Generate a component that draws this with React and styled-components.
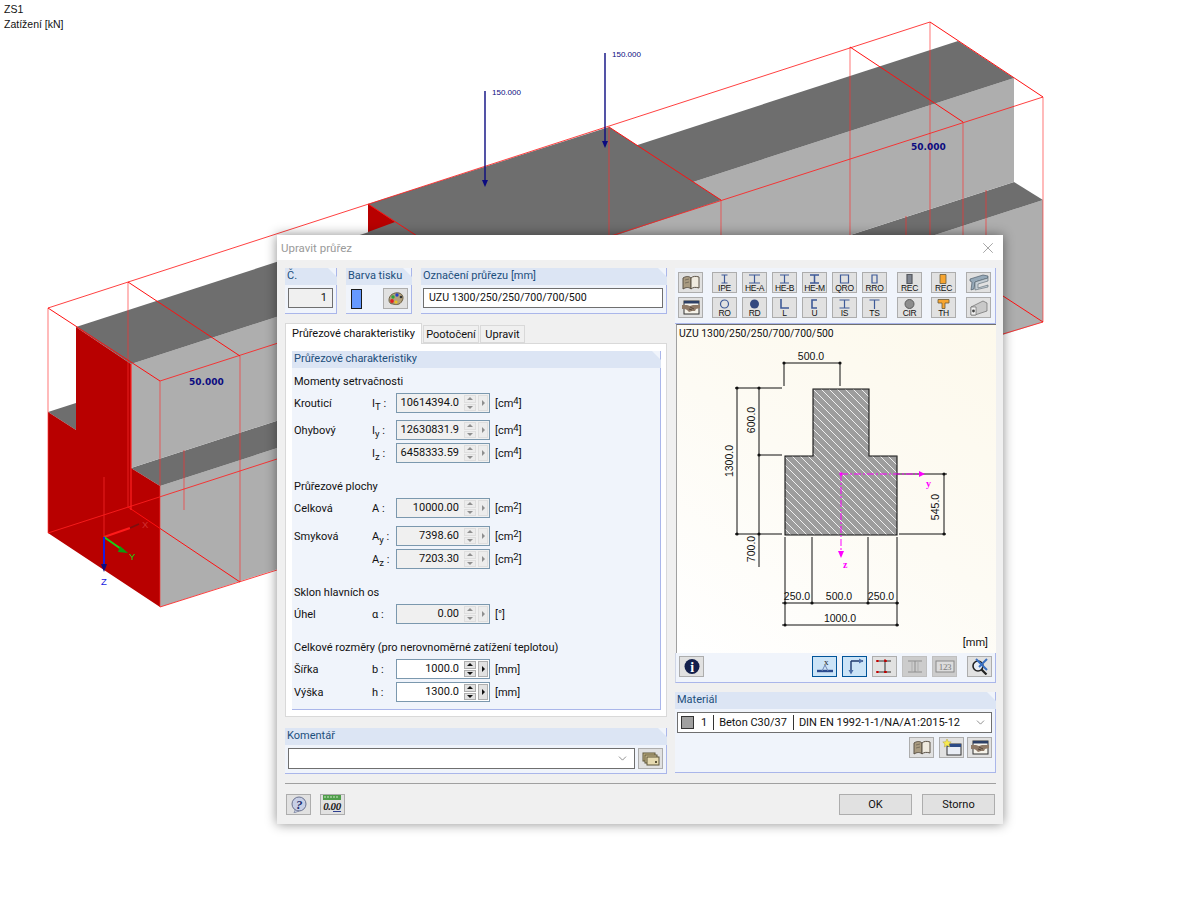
import React from 'react';
import styled, { createGlobalStyle } from 'styled-components';
import { X, ChevronDown } from 'lucide-react';

const GlobalStyle = createGlobalStyle`
  html, body {
    margin: 0;
    padding: 0;
    background: #fff;
  }
  body {
    width: 1199px;
    height: 899px;
    overflow: hidden;
    font-family: Roboto, "Noto Sans", "Liberation Sans", sans-serif;
    font-size: 11px;
    color: #111;
  }
`;

const Page = styled.div`
  position: relative;
  width: 1199px;
  height: 899px;
  overflow: hidden;
  background: #fff;
`;

const Scene = styled.svg`
  position: absolute;
  left: 0;
  top: 0;
`;

const Caption = styled.div`
  position: absolute;
  left: 4px;
  top: 2px;
  font-family: "Liberation Sans", Arial, sans-serif;
  font-size: 10.5px;
  line-height: 15px;
  color: #111;
`;

const Dialog = styled.div`
  position: absolute;
  left: 277px;
  top: 235px;
  width: 726px;
  height: 589px;
  background: #f0f0f0;
  box-shadow: 0 0 11px rgba(0, 0, 0, 0.45);
  display: flex;
  flex-direction: column;
`;

const TitleBar = styled.div`
  height: 25px;
  background: #fff;
  display: flex;
  align-items: center;
  justify-content: space-between;
  padding: 0 6px 0 4px;
  font-size: 11.5px;
  color: #9a9a9a;
  svg { color: #8a8a8a; }
`;

const Body = styled.div`
  display: grid;
  grid-template-columns: 382px 321px;
  column-gap: 8px;
  padding: 8px 7px 0 8px;
`;

const Column = styled.div`
  display: flex;
  flex-direction: column;
  height: 506px;
`;

const TopRow = styled.div`
  display: flex;
  gap: 9px;
  height: 46px;
`;

const Group = styled.div`
  flex: ${p => (p.$grow ? 1 : 'none')};
  width: ${p => (p.$width ? `${p.$width}px` : 'auto')};
  height: ${p => (p.$height ? `${p.$height}px` : 'auto')};
  margin-top: ${p => p.$top || 0}px;
  background: #f0f4fb;
  border-right: 1px solid #aab6ea;
  border-bottom: 1px solid #aab6ea;
  box-sizing: border-box;
  display: flex;
  flex-direction: column;
`;

const GroupHead = styled.div`
  height: 17px;
  line-height: 16px;
  margin-right: -1px;
  padding-left: 2px;
  background: #dce5f4;
  color: #1d4f7c;
  font-size: 11px;
  white-space: nowrap;
  clip-path: polygon(0 0, calc(100% - 9px) 0, 100% 9px, 100% 100%, 0 100%);
`;

const GroupContent = styled.div`
  display: flex;
  align-items: center;
  justify-content: ${p => p.$justify || 'flex-start'};
  padding: ${p => p.$pad || '3px 3px 0 3px'};
  gap: ${p => p.$gap || 0}px;
`;

const FieldBox = styled.div`
  box-sizing: border-box;
  width: ${p => (p.$width ? `${p.$width}px` : 'auto')};
  flex: ${p => (p.$width ? 'none' : 1)};
  height: 20px;
  line-height: 18px;
  border: 1px solid #6f6f6f;
  padding: 0 5px;
  background: ${p => (p.$disabled ? '#f0f0f0' : '#fff')};
  text-align: ${p => (p.$right ? 'right' : 'left')};
  font-size: ${p => (p.$right ? 11 : 10.6)}px;
`;

const Swatch = styled.div`
  box-sizing: border-box;
  width: 11px;
  height: 20px;
  margin-left: 2px;
  background: #6699ff;
  border: 1px solid #1b1b1b;
`;

const IconButton = styled.button`
  box-sizing: border-box;
  width: 25px;
  height: 21px;
  padding: 0;
  flex: none;
  margin-left: ${p => p.$left || 0}px;
  background: ${p => (p.$active ? '#cce4f7' : p.$off ? '#cccccc' : '#e1e1e1')};
  border: 1px solid ${p => (p.$active ? '#005499' : p.$off ? '#bfbfbf' : '#adadad')};
  display: flex;
  flex-direction: column;
  align-items: center;
  justify-content: center;
  font-family: "Liberation Sans", Arial, sans-serif;
  font-size: 8.5px;
  line-height: 8px;
  letter-spacing: -0.3px;
  color: #111;
  svg { display: block; flex: none; }
`;

const TabBar = styled.div`
  display: flex;
  align-items: flex-end;
  height: 20px;
  margin-top: 9px;
  position: relative;
  z-index: 1;
`;

const Tab = styled.div`
  box-sizing: border-box;
  height: ${p => (p.$active ? 21 : 18)}px;
  width: ${p => p.$width}px;
  margin-right: 1px;
  margin-bottom: ${p => (p.$active ? -1 : 0)}px;
  text-align: center;
  white-space: nowrap;
  line-height: ${p => (p.$active ? 19 : 17)}px;
  background: ${p => (p.$active ? '#fff' : '#f0f0f0')};
  border: 1px solid #d9d9d9;
  border-bottom: ${p => (p.$active ? 'none' : '1px solid #d9d9d9')};
`;

const TabPane = styled.div`
  box-sizing: border-box;
  height: 374px;
  background: #fff;
  border: 1px solid #d9d9d9;
  padding: 7px 5px 6px 6px;
  display: flex;
`;

const SectionBody = styled.div`
  padding: 0 0 0 2px;
  display: flex;
  flex-direction: column;
`;

const SectionTitle = styled.div`
  margin-top: ${p => p.$top}px;
  height: 14px;
  line-height: 14px;
`;

const Row = styled.div`
  display: grid;
  grid-template-columns: 78px 24px 94px auto;
  align-items: center;
  height: 20px;
  margin-top: ${p => p.$top}px;
`;

const Symbol = styled.span`
  white-space: nowrap;
  font-size: 11px;
`;

const Low = styled.span`
  font-size: 9.5px;
  vertical-align: -3px;
  line-height: 0;
`;

const High = styled.span`
  font-size: 9.5px;
  vertical-align: 3px;
  line-height: 0;
`;

const Unit = styled.span`
  margin-left: 5px;
`;

const Spinner = styled.div`
  box-sizing: border-box;
  height: 20px;
  border: 1px solid #7b98ae;
  background: ${p => (p.$disabled ? '#f0f0f0' : '#fff')};
  display: flex;
  align-items: stretch;
  color: #111;
`;

const SpinValue = styled.div`
  flex: 1;
  text-align: right;
  line-height: 18px;
  padding-right: 5px;
`;

const SpinArrows = styled.div`
  width: 12px;
  margin: 1px 0;
  display: flex;
  flex-direction: column;
  gap: 1px;
`;

const SpinCell = styled.div`
  flex: 1;
  display: flex;
  align-items: center;
  justify-content: center;
  background: ${p => (p.$disabled ? '#ececec' : '#e1e1e1')};
  border: 1px solid ${p => (p.$disabled ? '#dedede' : '#adadad')};
`;

const SpinNext = styled(SpinCell)`
  flex: none;
  width: 8px;
  margin: 1px 1px 1px 2px;
`;

const Arrow = styled.div`
  width: 0;
  height: 0;
  border-left: ${p => (p.$dir === 'right' ? '3px solid' : '3px solid transparent')};
  border-right: ${p => (p.$dir === 'right' ? '0' : '3px solid transparent')};
  border-top: ${p => (p.$dir === 'down' ? '3px solid' : p.$dir === 'right' ? '3px solid transparent' : '0')};
  border-bottom: ${p => (p.$dir === 'up' ? '3px solid' : p.$dir === 'right' ? '3px solid transparent' : '0')};
  border-left-color: ${p => (p.$dir === 'right' ? (p.$disabled ? '#8f8f8f' : '#111') : 'transparent')};
  border-top-color: ${p => (p.$dir === 'down' ? (p.$disabled ? '#8f8f8f' : '#111') : 'transparent')};
  border-bottom-color: ${p => (p.$dir === 'up' ? (p.$disabled ? '#8f8f8f' : '#111') : 'transparent')};
`;

const ComboBox = styled.div`
  box-sizing: border-box;
  flex: 1;
  height: 21px;
  border: 1px solid #6f6f6f;
  background: #fff;
  display: flex;
  align-items: center;
  justify-content: flex-end;
  padding-right: 5px;
  color: #555;
`;

const ToolRow = styled.div`
  display: flex;
  padding-left: 3px;
  margin-top: 4px;
`;

const Preview = styled.div`
  box-sizing: border-box;
  position: relative;
  height: 329px;
  margin-left: 1px;
  border-top: 1px solid #6f6f6f;
  border-left: 1px solid #a0a0a0;
  background: linear-gradient(215deg, #fdf9ec 0%, #fdfbf4 50%, #ffffff 100%);
`;

const PreviewLabel = styled.div`
  padding: 2px 0 0 2px;
  font-size: 10.4px;
  line-height: 14px;
`;

const PreviewUnit = styled.div`
  position: absolute;
  right: 8px;
  bottom: 3px;
  line-height: 14px;
`;

const Drawing = styled.svg`
  position: absolute;
  left: -1px;
  top: -1px;
`;

const PreviewTools = styled.div`
  box-sizing: border-box;
  height: 30px;
  background: #f0f4fb;
  border-bottom: 1px solid #aab6ea;
  border-right: 1px solid #aab6ea;
  border-left: 1px solid #d0d6e6;
  display: flex;
  padding: 3px 0 0 3px;
`;

const MaterialCombo = styled.div`
  box-sizing: border-box;
  height: 21px;
  margin: 3px 3px 0 2px;
  padding-right: 4px;
  border: 1px solid #6f6f6f;
  background: #fff;
  display: flex;
  align-items: center;
  white-space: nowrap;
  svg { flex: none; }
`;

const MaterialCell = styled.div`
  padding: 0 6px 0 ${p => p.$left || 5}px;
  height: 15px;
  line-height: 15px;
  border-right: ${p => (p.$last ? 'none' : '1px solid #333')};
  flex: ${p => (p.$last ? 1 : 'none')};
`;

const MaterialSwatch = styled.div`
  box-sizing: border-box;
  width: 13px;
  height: 13px;
  margin-left: 3px;
  background: #a0a0a0;
  border: 1px solid #333;
  flex: none;
`;

const ButtonRow = styled.div`
  display: flex;
  justify-content: flex-end;
  padding: 4px 3px 0 0;
`;

const Separator = styled.div`
  height: 1px;
  margin: 9px 7px 0 8px;
  background: #a0a0a0;
`;

const Footer = styled.div`
  display: flex;
  align-items: center;
  padding: 10px 8px 0 9px;
`;

const TextButton = styled.button`
  box-sizing: border-box;
  width: 73px;
  height: 21px;
  padding: 0;
  margin-left: ${p => p.$left || 0}px;
  background: #e1e1e1;
  border: 1px solid #adadad;
  font: inherit;
  color: #111;
`;

// little drawings for the toolbars
const Ico = ({ w = 20, h = 17, children }) => (
  <svg width={w} height={h} viewBox={`0 0 ${w} ${h}`}>{children}</svg>
);

const Book = () => (
  <Ico>
    <path d="M2 4c3-2 6-2 8 0v11c-2-2-5-2-8 0z" fill="#a89a80" stroke="#5b5246" />
    <path d="M18 3c-3-1-6-1-8 1v11c2-2 5-2 8-1z" fill="#efeadf" stroke="#5b5246" />
    <path d="M4 6l4-1M4 9l4-1" stroke="#6d6455" strokeWidth="0.8" />
  </Ico>
);

const HandBook = () => (
  <Ico>
    <rect x="3" y="2" width="15" height="13" fill="#f6f3ea" stroke="#333" />
    <rect x="3" y="2" width="15" height="2.5" fill="#2c3f66" />
    <path d="M1 6h5l3 1 3-1h7v3l-4 1-1 2h-3l-3 1-2-2-2-1H1z" fill="#8f7a68" />
    <path d="M9 8l4 2M8 10l3 1" stroke="#3d3028" strokeWidth="0.7" />
  </Ico>
);

const NewWindow = () => (
  <Ico>
    <rect x="5" y="5" width="14" height="11" fill="#e9edf5" stroke="#333" />
    <rect x="5" y="5" width="14" height="3" fill="#2c4a86" />
    <path d="M5 0l1.3 2.7 2.9.3-2.1 2 .6 3-2.7-1.5L2.3 8l.6-3L.8 3l2.9-.3z" fill="#f8ea50" stroke="#b3a23a" strokeWidth="0.5" />
  </Ico>
);

const Palette = () => (
  <Ico>
    <path d="M3 10c0-5 5-8 10-7 4 1 5 5 3 8-2 4-6 4-9 3-3 0-4-2-4-4z" fill="#b3a27c" stroke="#6a5d42" />
    <circle cx="7" cy="7" r="1.7" fill="#2fa33a" />
    <circle cx="11" cy="5" r="1.7" fill="#2442c8" />
    <circle cx="6" cy="11" r="1.9" fill="#e02020" />
    <circle cx="10" cy="12" r="1.5" fill="#e9c21f" />
    <circle cx="15" cy="7" r="1.3" fill="#333" />
  </Ico>
);

const Stacked = () => (
  <Ico>
    <rect x="2" y="3" width="12" height="8" fill="#cdbd8a" stroke="#5c5438" />
    <rect x="4" y="5" width="12" height="8" fill="#d8c998" stroke="#5c5438" />
    <rect x="6" y="7" width="12" height="8" fill="#e6dab0" stroke="#5c5438" />
    <rect x="14" y="11" width="2" height="2" fill="#5c5438" />
  </Ico>
);

const Help = () => (
  <Ico>
    <circle cx="10" cy="8" r="7" fill="#c7cfe6" stroke="#6b7390" />
    <path d="M6 14l-1 3 5-2z" fill="#c7cfe6" stroke="#6b7390" strokeWidth="0.6" />
    <text x="10" y="12.5" fontFamily="Liberation Serif, serif" fontWeight="700" fontStyle="italic" fontSize="13" fill="#1f2f70" textAnchor="middle">?</text>
  </Ico>
);

const Units = () => (
  <Ico w={23} h={19}>
    <rect x="2" y="0" width="18" height="5" fill="#4f9e4a" />
    <path d="M4 1v2M7 1v2M10 1v2M13 1v2M16 1v2" stroke="#cfe8c8" />
    <text x="11" y="15" fontFamily="Liberation Serif, serif" fontStyle="italic" fontWeight="700" fontSize="11" fill="#1a1a1a" textAnchor="middle" letterSpacing="-0.4">0.00</text>
    <path d="M12 16.5h8" stroke="#2e3f8f" />
  </Ico>
);

const Info = () => (
  <Ico>
    <circle cx="10" cy="8.5" r="7.5" fill="#131f4c" />
    <text x="10" y="13.5" fontFamily="Liberation Serif, serif" fontWeight="700" fontSize="14" fill="#fff" textAnchor="middle">i</text>
  </Ico>
);

const AxisX = () => (
  <Ico>
    <text x="11" y="7" fontFamily="Liberation Serif, serif" fontSize="9" fill="#222" textAnchor="middle">x</text>
    <path d="M2 13h16" stroke="#2b4b8f" strokeWidth="2.4" />
    <path d="M10 7l-3 6M10 7l3 6" fill="none" stroke="#6f87b5" />
  </Ico>
);

const AxisYZ = () => (
  <Ico>
    <path d="M6 3v12M6 3h12" fill="none" stroke="#1f3a6e" strokeWidth="1.4" />
    <path d="M14 0.5l4.5 2.5L14 5.5zM3.5 12l2.5 4.5 2.5-4.5z" fill="#4f6fa8" />
  </Ico>
);

const RedPoints = () => (
  <Ico>
    <path d="M4 3h12M4 14h12M10 3v11" stroke="#333" />
    <path d="M2 3h16M2 14h16" stroke="#c00000" strokeDasharray="1 7" strokeLinecap="round" strokeWidth="2" />
    <path d="M10 1v2M10 13v2" stroke="#c00000" />
  </Ico>
);

const DimOff = () => (
  <Ico>
    <path d="M3 3h14M3 14h14M10 3v11" stroke="#8e8e8e" fill="none" />
    <path d="M7 3v11M13 3v11" stroke="#adadad" fill="none" />
  </Ico>
);

const Num123 = () => (
  <Ico>
    <rect x="1" y="3" width="18" height="11" fill="#dcdcdc" stroke="#8a8a8a" />
    <text x="10" y="12" fontFamily="Liberation Serif, serif" fontSize="9" fill="#7a7a7a" textAnchor="middle">123</text>
  </Ico>
);

const Zoom = () => (
  <Ico>
    <circle cx="8" cy="8" r="5" fill="#e6ecf5" stroke="#222" strokeWidth="1.6" />
    <path d="M11.5 11.5l5 5" stroke="#222" strokeWidth="2.2" />
    <path d="M6 1l11 11M17 1L9 9" stroke="#3a6fc0" strokeWidth="2" />
  </Ico>
);

const BeamA = () => (
  <Ico>
    <path d="M1 5l13-4 5 1v2L6 8l-1 7-3 1 1-8-2-1z" fill="#96a9b8" stroke="#3e4e5c" strokeWidth="0.6" />
    <path d="M6 8l13-4v3L9 10v4l10-3v2L6 16z" fill="#c4cdd4" stroke="#56646f" strokeWidth="0.6" />
  </Ico>
);

const BeamB = () => (
  <Ico>
    <path d="M2 8l12-6 4 2v8L6 16H2z" fill="#c8c8c8" stroke="#5a5a5a" strokeWidth="0.6" />
    <path d="M2 8h5v8H2z" fill="#f2f2f2" stroke="#5a5a5a" strokeWidth="0.6" />
    <circle cx="4.5" cy="12" r="1.4" fill="#444" />
  </Ico>
);

// profile glyphs above the little labels
const Prof = ({ d, fill = 'none', stroke = '#3e5a98', sw = 1.2, children }) => (
  <svg width="15" height="10" viewBox="0 0 15 10">
    {d && <path d={d} fill={fill} stroke={stroke} strokeWidth={sw} />}
    {children}
  </svg>
);

const shapes = {
  IPE: <Prof d="M4.5 1h6M4.5 9h6M7.5 1v8" />,
  'HE-A': <Prof d="M2 1h11M2 9h11M7.5 1v8" />,
  'HE-B': <Prof d="M3 1h9M3 9h9M7.5 1v8" />,
  'HE-M': <Prof d="M3 1h9M3 9h9M7.5 1v8" sw={1.5} />,
  QRO: <Prof d="M3.5 1h8v8h-8z" />,
  RRO: <Prof d="M5 1h5v8H5z" />,
  REC: <Prof d="M5 0.5h5v9H5z" fill="#7f8590" stroke="#55585e" />,
  REC2: <Prof d="M4 0.5h6v9H4z" fill="#f7a530" stroke="#6a5a3a" sw={0.8} />,
  RO: <Prof><circle cx="7.5" cy="5" r="4" fill="none" stroke="#3e5a98" strokeWidth="1.2" /></Prof>,
  RD: <Prof><circle cx="7.5" cy="5" r="4.5" fill="#33487f" /></Prof>,
  L: <Prof d="M4 0v9h8" sw={1.6} />,
  U: <Prof d="M10 1H5v8h5" sw={1.6} />,
  IS: <Prof d="M2.5 1h10M2.5 9h10M7.5 1v8" />,
  TS: <Prof d="M2.5 1h10M7.5 1v9" />,
  CIR: <Prof><circle cx="7.5" cy="5" r="4.5" fill="#8d8d8d" stroke="#5e5e5e" /></Prof>,
  TH: <Prof d="M2 0.5h11v3.5H9v5.5H6V4H2z" fill="#f7a530" stroke="#6a5a3a" sw={0.8} />,
};

const toolRows = [
  [
    { el: <Book /> },
    { label: 'IPE', left: 9 }, { label: 'HE-A', left: 5 }, { label: 'HE-B', left: 5 }, { label: 'HE-M', left: 5 },
    { label: 'QRO', left: 5 }, { label: 'RRO', left: 5 }, { label: 'REC', left: 10 },
    { label: 'REC', shape: 'REC2', left: 9 }, { el: <BeamA />, left: 10 },
  ],
  [
    { el: <HandBook /> },
    { label: 'RO', left: 9 }, { label: 'RD', left: 5 }, { label: 'L', left: 5 }, { label: 'U', left: 5 },
    { label: 'IS', left: 5 }, { label: 'TS', left: 5 }, { label: 'CIR', left: 10 },
    { label: 'TH', left: 9 }, { el: <BeamB />, left: 10 },
  ],
];

const SpinField = ({ value, disabled }) => (
  <Spinner $disabled={disabled}>
    <SpinValue>{value}</SpinValue>
    <SpinArrows>
      <SpinCell $disabled={disabled}><Arrow $dir="up" $disabled={disabled} /></SpinCell>
      <SpinCell $disabled={disabled}><Arrow $dir="down" $disabled={disabled} /></SpinCell>
    </SpinArrows>
    <SpinNext $disabled={disabled}><Arrow $dir="right" $disabled={disabled} /></SpinNext>
  </Spinner>
);

const FieldRow = ({ top, label, symbol, value, unit, disabled }) => (
  <Row $top={top}>
    <span>{label}</span>
    <Symbol>{symbol}</Symbol>
    <SpinField value={value} disabled={disabled} />
    <Unit>{unit}</Unit>
  </Row>
);

const cm4 = <>[cm<High>4</High>]</>;
const cm2 = <>[cm<High>2</High>]</>;

// 3D model behind the dialog, page coordinates
const Model = () => {
  const ties = [[48, 308, 160, 381], [128, 282, 240, 356], [368, 204, 480, 277], [609, 127, 721, 200], [850, 47, 963, 122], [930, 22, 1043, 97],
    [128, 507, 240, 582], [1003, 296, 1043, 322]];
  const rails = [[48, 308, 930, 22], [160, 381, 1043, 97], [48, 533, 277, 459], [160, 607, 277, 570], [1003, 334, 1043, 322]];
  const posts = [[48, 308, 533], [128, 282, 507], [160, 381, 607], [240, 356, 582], [184, 450, 510], [609, 127, 235], [721, 200, 235],
    [850, 47, 235], [930, 22, 235], [963, 122, 235], [906, 216, 235], [986, 190, 235], [1043, 97, 322], [104, 477, 537]];
  return (
    <Scene width="1199" height="899" viewBox="0 0 1199 899">
      <polygon points="160,486 1043,200 1043,322 160,607" fill="#aeaeae" />
      <polygon points="131,468 1014,182 1043,200 160,486" fill="#6e6e6e" />
      <polygon points="131,364 1014,78 1014,182 131,468" fill="#aeaeae" />
      <polygon points="76,327 958,41 1014,78 131,364" fill="#6e6e6e" />
      <polygon points="368,204 609,127 721,200 617,235 500,300 368,300" fill="#6e6e6e" />
      <polygon points="368,204 395,222 368,232" fill="#b80000" />
      <polygon points="48,412 76,403 76,430" fill="#6e6e6e" />
      <polygon points="76,327 131,364 131,468 160,486 160,607 48,533 48,412 76,430" fill="#b80000" />
      {posts.map(([x, y1, y2], i) => (
        <line key={i} x1={x} y1={y1} x2={x} y2={y2} stroke="#ff3030" strokeOpacity="0.55" strokeWidth="1.2" />
      ))}
      {rails.map(([a, b, c, d], i) => (
        <line key={i} x1={a} y1={b} x2={c} y2={d} stroke="#ff2020" strokeOpacity="0.85" />
      ))}
      {ties.map(([a, b, c, d], i) => (
        <line key={i} x1={a} y1={b} x2={c} y2={d} stroke="#ff1010" />
      ))}
      <line x1="131" y1="364" x2="131" y2="510" stroke="#ff2020" strokeOpacity="0.8" strokeWidth="1.5" />
      <line x1="605" y1="53" x2="605" y2="142" stroke="#0b0b80" strokeWidth="1.4" />
      <polygon points="602,141 608,141 605,148" fill="#0b0b80" />
      <line x1="485" y1="91" x2="485" y2="181" stroke="#0b0b80" strokeWidth="1.4" />
      <polygon points="482,180 488,180 485,187" fill="#0b0b80" />
      <g fontFamily="Liberation Sans, sans-serif" fontSize="8" fill="#0b0b80">
        <text x="612" y="57">150.000</text>
        <text x="492" y="95">150.000</text>
      </g>
      <g fontFamily="DejaVu Sans, sans-serif" fontSize="9" fontWeight="700" fill="#0b0b80">
        <text x="189" y="385">50.000</text>
        <text x="911" y="150">50.000</text>
      </g>
      <line x1="104" y1="537" x2="130" y2="528" stroke="#ff1a1a" strokeWidth="2" />
      <line x1="130" y1="528" x2="139" y2="524" stroke="#7a1010" strokeWidth="1.4" />
      <line x1="104" y1="537" x2="124" y2="551" stroke="#16d216" strokeWidth="2" />
      <polygon points="120,546 128,553 118,552" fill="#0f9a0f" />
      <line x1="104" y1="537" x2="104" y2="566" stroke="#1a1ae0" strokeWidth="2" />
      <polygon points="101,564 107,564 104,572" fill="#0b0b80" />
      <g fontFamily="Liberation Sans, sans-serif" fontSize="9.5">
        <text x="142" y="528" fill="#d23030">X</text>
        <text x="129" y="560" fill="#16d216">Y</text>
        <text x="101" y="585" fill="#1a1ae0">Z</text>
      </g>
    </Scene>
  );
};

const Dim = ({ x, y, rot, children }) => (
  <text x={x} y={y} textAnchor="middle" transform={rot ? `rotate(-90 ${x} ${y})` : undefined}>{children}</text>
);

// section drawing, offsets are relative to the preview corner (676,324)
const SectionDrawing = () => {
  const P = (x, y) => `${x - 676},${y - 324}`;
  const outline = [[813, 389], [869, 389], [869, 456], [897, 456], [897, 535], [785, 535], [785, 456], [813, 456]]
    .map(([x, y]) => P(x, y)).join(' ');
  const L = (x1, y1, x2, y2) => <line x1={x1 - 676} y1={y1 - 324} x2={x2 - 676} y2={y2 - 324} />;
  const dots = [[784, 363], [840, 363], [737, 388], [759, 388], [759, 455], [737, 534], [759, 534],
    [785, 603], [812, 603], [868, 603], [897, 603], [785, 625], [897, 625], [944, 474], [944, 534]];
  return (
    <Drawing width="320" height="329" viewBox="0 0 320 329">
      <defs>
        <pattern id="hatch" width="8" height="8" patternUnits="userSpaceOnUse">
          <rect width="8" height="8" fill="#9d9d9d" />
          <path d="M-2 6l4 4M0 0l8 8M6 -2l4 4" stroke="#f0f0f0" strokeWidth="1" />
        </pattern>
      </defs>
      <polygon points={outline} fill="url(#hatch)" stroke="#111" strokeWidth="1.1" />
      <g stroke="#111" strokeWidth="1">
        {L(784, 363, 840, 363)}{L(784, 363, 784, 386)}{L(840, 363, 840, 386)}
        {L(737, 388, 737, 534)}{L(759, 388, 759, 567)}
        {L(735, 388, 782, 388)}{L(759, 455, 782, 455)}{L(735, 534, 782, 534)}
        {L(785, 537, 785, 625)}{L(812, 537, 812, 603)}{L(868, 537, 868, 603)}{L(897, 537, 897, 625)}
        {L(782, 603, 899, 603)}{L(782, 625, 899, 625)}
        {L(899, 534, 946, 534)}{L(897, 474, 947, 474)}{L(944, 474, 944, 534)}
      </g>
      {dots.map(([x, y], i) => <circle key={i} cx={x - 676} cy={y - 324} r="1.6" fill="#111" />)}
      <g stroke="#ff00ff" strokeWidth="1" strokeDasharray="7 2 2 2">
        {L(841, 474, 920, 474)}{L(841, 474, 841, 550)}
      </g>
      <circle cx={841 - 676} cy={474 - 324} r="1.7" fill="#ff00ff" />
      <polygon points={`${P(919, 471)} ${P(925, 474)} ${P(919, 477)}`} fill="#ff00ff" />
      <polygon points={`${P(838, 551)} ${P(844, 551)} ${P(841, 558)}`} fill="#ff00ff" />
      <g fontFamily="Liberation Serif, serif" fontSize="10" fontWeight="700" fill="#ff00ff">
        <text x={926 - 676} y={487 - 324}>y</text>
        <text x={843 - 676} y={568 - 324}>z</text>
      </g>
      <g fontFamily="Liberation Sans, sans-serif" fontSize="10.5" fill="#111">
        <Dim x={811 - 676} y={360 - 324}>500.0</Dim>
        <Dim x={733 - 676} y={461 - 324} rot>1300.0</Dim>
        <Dim x={755 - 676} y={420 - 324} rot>600.0</Dim>
        <Dim x={755 - 676} y={549 - 324} rot>700.0</Dim>
        <Dim x={939 - 676} y={507 - 324} rot>545.0</Dim>
        <Dim x={797 - 676} y={600 - 324}>250.0</Dim>
        <Dim x={839 - 676} y={600 - 324}>500.0</Dim>
        <Dim x={881 - 676} y={600 - 324}>250.0</Dim>
        <Dim x={840 - 676} y={622 - 324}>1000.0</Dim>
      </g>
    </Drawing>
  );
};

export default function App() {
  return (
    <Page>
      <GlobalStyle />
      <Model />
      <Caption>ZS1<br />Zatížení [kN]</Caption>

      <Dialog>
        <TitleBar>
          Upravit průřez
          <X size={18} strokeWidth={1} />
        </TitleBar>

        <Body>
          <Column>
            <TopRow>
              <Group $width={52}>
                <GroupHead>Č.</GroupHead>
                <GroupContent><FieldBox $width={45} $disabled $right>1</FieldBox></GroupContent>
              </Group>
              <Group $width={66}>
                <GroupHead>Barva tisku</GroupHead>
                <GroupContent $justify="space-between"><Swatch /><IconButton><Palette /></IconButton></GroupContent>
              </Group>
              <Group $grow>
                <GroupHead>Označení průřezu [mm]</GroupHead>
                <GroupContent $pad="3px 3px 0 2px"><FieldBox>UZU 1300/250/250/700/700/500</FieldBox></GroupContent>
              </Group>
            </TopRow>

            <TabBar>
              <Tab $active $width={137}>Průřezové charakteristiky</Tab>
              <Tab $width={56}>Pootočení</Tab>
              <Tab $width={45}>Upravit</Tab>
            </TabBar>
            <TabPane>
              <Group $grow>
                <GroupHead>Průřezové charakteristiky</GroupHead>
                <SectionBody>
                  <SectionTitle $top={7}>Momenty setrvačnosti</SectionTitle>
                  <FieldRow top={4} label="Krouticí" symbol={<>I<Low>T</Low> :</>} value="10614394.0" unit={cm4} disabled />
                  <FieldRow top={7} label="Ohybový" symbol={<>I<Low>y</Low> :</>} value="12630831.9" unit={cm4} disabled />
                  <FieldRow top={3} label="" symbol={<>I<Low>z</Low> :</>} value="6458333.59" unit={cm4} disabled />

                  <SectionTitle $top={17}>Průřezové plochy</SectionTitle>
                  <FieldRow top={4} label="Celková" symbol="A :" value="10000.00" unit={cm2} disabled />
                  <FieldRow top={8} label="Smyková" symbol={<>A<Low>y</Low> :</>} value="7398.60" unit={cm2} disabled />
                  <FieldRow top={3} label="" symbol={<>A<Low>z</Low> :</>} value="7203.30" unit={cm2} disabled />

                  <SectionTitle $top={17}>Sklon hlavních os</SectionTitle>
                  <FieldRow top={4} label="Úhel" symbol="α :" value="0.00" unit="[°]" disabled />

                  <SectionTitle $top={17}>Celkové rozměry (pro nerovnoměrné zatížení teplotou)</SectionTitle>
                  <FieldRow top={4} label="Šířka" symbol="b :" value="1000.0" unit="[mm]" />
                  <FieldRow top={3} label="Výška" symbol="h :" value="1300.0" unit="[mm]" />
                </SectionBody>
              </Group>
            </TabPane>

            <Group $top={11} $height={46}>
              <GroupHead>Komentář</GroupHead>
              <GroupContent $gap={3}>
                <ComboBox><ChevronDown size={13} strokeWidth={1.2} /></ComboBox>
                <IconButton><Stacked /></IconButton>
              </GroupContent>
            </Group>
          </Column>

          <Column>
            <Group $height={56}>
              {toolRows.map((row, r) => (
                <ToolRow key={r}>
                  {row.map((t, i) => (
                    <IconButton key={i} $left={t.left}>
                      {t.el || <>{shapes[t.shape || t.label]}{t.label}</>}
                    </IconButton>
                  ))}
                </ToolRow>
              ))}
            </Group>

            <Preview>
              <PreviewLabel>UZU 1300/250/250/700/700/500</PreviewLabel>
              <SectionDrawing />
              <PreviewUnit>[mm]</PreviewUnit>
            </Preview>
            <PreviewTools>
              <IconButton><Info /></IconButton>
              <IconButton $left={108} $active><AxisX /></IconButton>
              <IconButton $left={5} $active><AxisYZ /></IconButton>
              <IconButton $left={5}><RedPoints /></IconButton>
              <IconButton $left={5} $off><DimOff /></IconButton>
              <IconButton $left={5} $off><Num123 /></IconButton>
              <IconButton $left={10}><Zoom /></IconButton>
            </PreviewTools>

            <Group $top={9} $height={81}>
              <GroupHead>Materiál</GroupHead>
              <MaterialCombo>
                <MaterialSwatch />
                <MaterialCell $left={7}>1</MaterialCell>
                <MaterialCell>Beton C30/37</MaterialCell>
                <MaterialCell $last>DIN EN 1992-1-1/NA/A1:2015-12</MaterialCell>
                <ChevronDown size={13} strokeWidth={1.2} color="#555" />
              </MaterialCombo>
              <ButtonRow>
                <IconButton><Book /></IconButton>
                <IconButton $left={5}><NewWindow /></IconButton>
                <IconButton $left={3}><HandBook /></IconButton>
              </ButtonRow>
            </Group>
          </Column>
        </Body>

        <Separator />
        <Footer>
          <IconButton><Help /></IconButton>
          <IconButton $left={9}><Units /></IconButton>
          <TextButton $left={494}>OK</TextButton>
          <TextButton $left={10}>Storno</TextButton>
        </Footer>
      </Dialog>
    </Page>
  );
}
